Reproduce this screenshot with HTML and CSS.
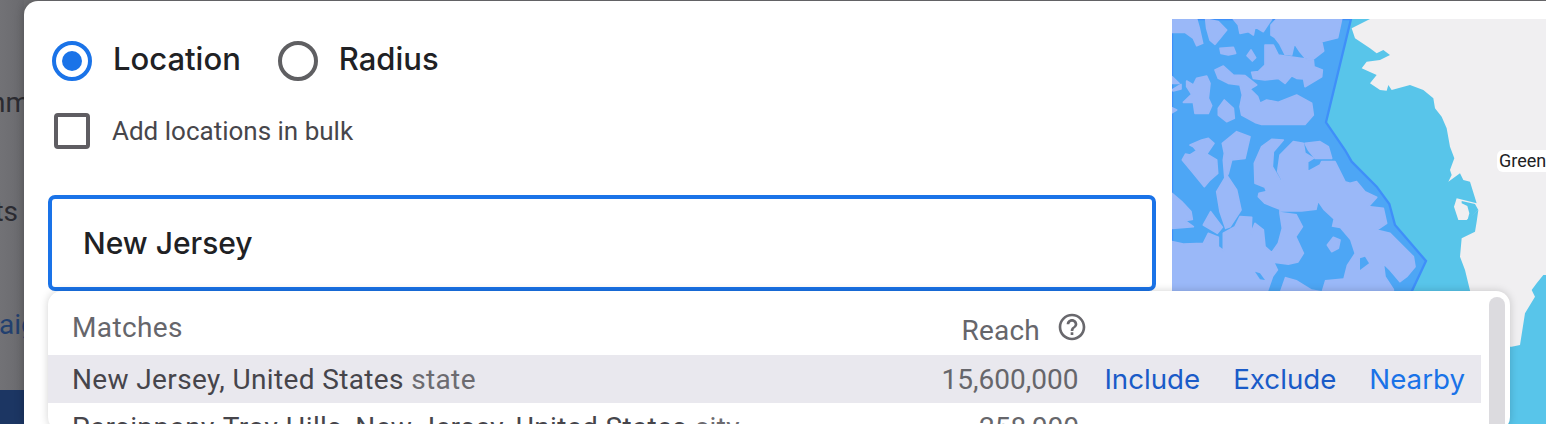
FILE: index.html
```html
<!DOCTYPE html>
<html>
<head>
    <meta charset="UTF-8">
    <title>Locations</title>
    <link rel="stylesheet" href="styles.css">
</head>
<body>
    <div class="backdrop">
        <div class="peek peek1">nm</div>
        <div class="peek peek2">ts</div>
        <div class="peek peek3">aig</div>
        <div class="darkbar"></div>
    </div>

    <div class="modal">
        <div class="form">
            <div class="radios">
                <span class="radio on"></span>
                <span class="radio-label">Location</span>
                <span class="radio"></span>
                <span class="radio-label">Radius</span>
            </div>
            <div class="bulk">
                <span class="checkbox"></span>
                <span>Add locations in bulk</span>
            </div>
            <div class="search">New Jersey</div>
        </div>

        <div class="map">
            <svg class="map-svg" viewBox="66 57 1122 1215" preserveAspectRatio="none">
                <rect class="land" x="66" y="57" width="1122" height="1215"/>
                <polygon class="sea" points="605,57 660,57 605,85 615,115 660,145 680,160 700,150 720,165 690,180 650,185 635,205 680,225 660,250 690,270 710,272 715,255 725,270 780,255 820,270 850,295 855,325 875,350 890,385 900,440 913,475 900,510 905,525 895,545 930,520 940,540 960,545 980,610 920,595 912,620 925,660 950,660 985,630 980,665 975,695 935,715 930,770 945,810 962,880 962,1272 66,1272 66,57"/>
                <polygon class="sea" points="1188,825 1180,825 1160,850 1145,870 1155,890 1125,940 1110,1035 1085,1040 1050,1040 1050,1272 1188,1272"/>
                <polygon class="sea" points="935,603 975,612 985,630 952,662 958,640 952,618 935,610"/>
                <polygon class="region" points="66,57 603,57 528,367 585,450 605,485 680,560 718,612 735,675 828,783 780,885 66,885"/>
                <!-- northern islands, coords from the 3x crop -->
                <g class="isle" transform="translate(45,45)">
                    <polygon points="21,12 95,12 103,40 113,85 95,92 85,70 60,52 21,52"/>
                    <polygon points="122,12 160,20 185,45 165,70 150,88 135,75 125,40"/>
                    <polygon points="205,12 320,12 295,50 270,35 265,60 250,50 225,55 220,30"/>
                    <polygon points="318,30 335,12 530,12 518,68 470,80 476,108 445,132 420,128 405,110 388,85 380,120 360,118 345,88 330,68 318,60"/>
                    <polygon points="300,90 325,90 340,120 370,125 445,135 447,155 472,165 470,185 420,215 416,192 395,190 380,182 360,205 340,190 300,195 265,190 260,172 280,170 300,150"/>
                    <polygon points="165,100 205,97 212,115 190,120 168,115"/>
                    <polygon points="258,105 272,128 262,138 246,122"/>
                    <polygon points="150,165 175,153 205,180 240,182 275,210 255,222 278,245 285,265 305,255 340,262 395,240 440,265 445,300 420,328 290,328 270,322 230,300 225,275 232,240 225,210 190,205 160,190"/>
                    <polygon points="65,198 85,210 95,190 125,183 135,205 130,250 140,272 130,295 90,295 85,262 55,262 80,238 65,215"/>
                    <polygon points="21,185 42,205 21,205"/>
                    <polygon points="21,225 48,208 48,222 25,228"/>
                    <polygon points="21,278 35,285 21,293"/>
                    <polygon points="178,255 205,280 208,310 185,320 160,300 160,280"/>
                </g>
                <g transform="translate(45,390)">
                    <g class="isle">
                        <polygon points="75,45 110,30 130,25 147,40 125,72 155,90 158,130 135,150 118,170 85,130 52,90 62,72 75,75 95,62 85,50"/>
                        <polygon points="172,40 215,5 255,20 240,85 200,90 190,130 180,150 175,90 178,70"/>
                        <polygon points="155,185 185,135 215,180 228,240 195,290 182,295 165,245"/>
                        <polygon points="21,190 50,215 78,245 82,268 60,272 85,290 21,295"/>
                        <polygon points="115,285 137,245 172,292 157,310"/>
                        <polygon points="420,40 465,35 490,50 500,85 450,85 430,60"/>
                        <polygon points="282,190 305,185 300,172 270,160 268,100 290,50 320,28 355,30 325,65 322,110 345,150 358,163 338,125 345,75 385,35 415,40 420,70 445,85 428,95 428,125 465,105 470,95 510,95 525,125 540,155 555,160 575,155 600,185 635,202 610,230 655,235 665,280 635,300 675,310 745,380 750,410 725,440 705,455 675,420 655,400 660,440 685,478 685,483 21,483 21,335 55,342 115,340 130,310 160,322 160,350 175,362 175,310 210,290 225,260 260,262 258,310 270,280 295,300 300,350 320,368 340,340 352,295 345,250 345,238 300,220 280,200"/>
                    </g>
                    <polygon class="channel" points="345,245 410,245 455,240 460,218 475,240 505,268 500,290 525,295 555,330 568,370 545,405 535,445 480,450 470,483 440,478 395,450 360,440 345,483 310,483 325,440 340,420 330,400 370,405 400,398 418,370 395,320 415,290 395,252"/>
                    <polygon class="isle" points="487,345 505,322 525,330 520,355 500,365"/>
                    <polygon class="channel" points="585,385 600,380 612,400 585,420"/>
                    <polygon class="channel" points="270,425 285,430 300,450 285,448"/>
                </g>
            </svg>
            <span class="map-label">Greenland</span>
        </div>

        <div class="dropdown">
            <div class="list">
                <div class="list-head">
                    <span class="name">Matches</span>
                    <span class="reach-head">Reach</span>
                    <svg class="help" viewBox="0 0 24 24"><path d="M11 18h2v-2h-2v2zm1-16C6.48 2 2 6.48 2 12s4.48 10 10 10 10-4.48 10-10S17.52 2 12 2zm0 18c-4.41 0-8-3.59-8-8s3.59-8 8-8 8 3.59 8 8-3.59 8-8 8zm0-14c-2.21 0-4 1.79-4 4h2c0-1.1.9-2 2-2s2 .9 2 2c0 2-3 1.75-3 5h2c0-2.25 3-2.5 3-5 0-2.21-1.79-4-4-4z"/></svg>
                </div>
                <div class="row hover">
                    <span class="name">New Jersey, United States <em>state</em></span>
                    <span class="reach">15,600,000</span>
                    <span class="actions">
                        <a class="act">Include</a>
                        <a class="act">Exclude</a>
                        <a class="act last">Nearby</a>
                    </span>
                </div>
                <div class="row">
                    <span class="name">Parsippany-Troy Hills, New Jersey, United States <em>city</em></span>
                    <span class="reach">258,000</span>
                </div>
            </div>
            <div class="scrollbar"></div>
        </div>
    </div>
</body>
</html>
```

FILE: styles.css
```css
html, body {
    margin: 0;
    height: 424px;
    overflow: hidden;
}
body {
    display: flex;
    background-color: #6f6f72;
    font-family: "Roboto", "Liberation Sans", sans-serif;
}

.backdrop {
    width: 24px;
    flex-shrink: 0;
    display: flex;
    flex-direction: column;
    overflow: hidden;
    background: linear-gradient(to right, #727276, #6a6a6e);
}
.peek {
    display: flex;
    font-size: 28px;
    line-height: 30px;
    color: #2b2b31;
}
.peek1 {
    margin-top: 88px;
    margin-left: -10px;
}
.peek2 {
    margin-top: 79px;
    justify-content: flex-end;
    padding-right: 6px;
}
.peek3 {
    margin-top: 83px;
    color: #22406f;
    margin-left: -1px;
}
.darkbar {
    margin-top: auto;
    height: 34px;
    background-color: #1c3663;
}

.modal {
    flex: 1;
    margin-top: 1px;
    display: flex;
    position: relative;
    background-color: #fff;
    border-radius: 14px 0 0 0;
    box-shadow: 0 0 10px rgba(0,0,0,0.25);
}

.form {
    width: 1148px;
    flex-shrink: 0;
    padding-left: 24px;
    box-sizing: border-box;
}
.radios {
    display: flex;
    align-items: center;
    margin-top: 40px;
    margin-left: 4px;
}
.radio {
    width: 40px;
    height: 40px;
    box-sizing: border-box;
    border: 4px solid #5f5f62;
    border-radius: 50%;
    display: flex;
    align-items: center;
    justify-content: center;
}
.radio.on {
    border-color: #1a73e8;
}
.radio.on::after {
    content: "";
    width: 20px;
    height: 20px;
    border-radius: 50%;
    background-color: #1a73e8;
}
.radio-label {
    font-family: "Inter", "Roboto", sans-serif;
    font-weight: 500;
    font-size: 31px;
    color: #202124;
    margin-left: 21px;
    margin-right: 37px;
    margin-top: -5px;
}
.bulk {
    display: flex;
    align-items: center;
    margin-top: 32px;
    margin-left: 6px;
    font-size: 26px;
    color: #47464b;
}
.checkbox {
    width: 36px;
    height: 36px;
    box-sizing: border-box;
    border: 4px solid #5f5d62;
    border-radius: 4px;
    margin-right: 22px;
}
.search {
    width: 1108px;
    height: 96px;
    margin-top: 46px;
    box-sizing: border-box;
    border: 4px solid #1a73e8;
    border-radius: 7px;
    padding-left: 31px;
    display: flex;
    align-items: center;
    font-family: "Inter", "Roboto", sans-serif;
    font-weight: 500;
    font-size: 30px;
    color: #202124;
}

.map {
    flex: 1;
    margin-top: 18px;
    position: relative;
    overflow: hidden;
}
.map-svg {
    display: block;
    width: 374px;
    height: 405px;
}
.land {
    fill: #f0eff1;
}
.sea {
    fill: #58c5ea;
}
.region {
    fill: #4da6f5;
    stroke: #3f8ff9;
    stroke-width: 7;
}
.isle {
    fill: #9ab8f8;
    stroke: #9ab8f8;
    stroke-width: 5;
    stroke-linejoin: round;
}
.channel {
    fill: #4da6f5;
}
.map-label {
    position: absolute;
    left: 325px;
    top: 131px;
    font-size: 18px;
    line-height: 22px;
    color: #202124;
    background-color: #fff;
    border-radius: 6px;
    padding: 0 2px;
    white-space: nowrap;
}

.dropdown {
    position: absolute;
    left: 24px;
    top: 290px;
    width: 1462px;
    height: 140px;
    display: flex;
    background-color: #fff;
    border-radius: 14px;
    box-shadow: 0 0 8px rgba(0,0,0,0.18);
    overflow: hidden;
    color: #46454b;
    font-size: 28px;
}
.list {
    width: 1433px;
    flex-shrink: 0;
}
.list-head {
    height: 64px;
    display: flex;
    align-items: center;
    color: #66666b;
}
.list-head .name {
    margin-top: 8px;
}
.name {
    flex: 1;
    padding-left: 24px;
    white-space: nowrap;
    letter-spacing: 0.37px;
}
.name em {
    font-style: normal;
    color: #6c6b70;
}
.reach-head {
    margin-right: 16px;
    margin-top: 14px;
    letter-spacing: 0.2px;
}
.help {
    width: 32px;
    height: 32px;
    fill: #69686d;
    margin-right: 393px;
    margin-top: 8px;
}
.row {
    height: 48px;
    display: flex;
    align-items: center;
}
.row.hover {
    background-color: #e9e8ee;
}
.reach {
    width: 354px;
    padding-right: 402px;
    text-align: right;
    color: #66666b;
    margin-left: -354px;
}
.hover .reach {
    padding-right: 26px;
}
.actions {
    display: flex;
    gap: 33px;
    padding-right: 16px;
    font-family: "Inter", "Roboto", sans-serif;
    font-size: 27.7px;
    color: #1a5bc8;
}
.act.last {
    color: #1a73e8;
}
.scrollbar {
    width: 16px;
    height: 200px;
    margin-left: 8px;
    margin-top: 6px;
    border-radius: 8px;
    background-color: #dcdbdf;
}
```
